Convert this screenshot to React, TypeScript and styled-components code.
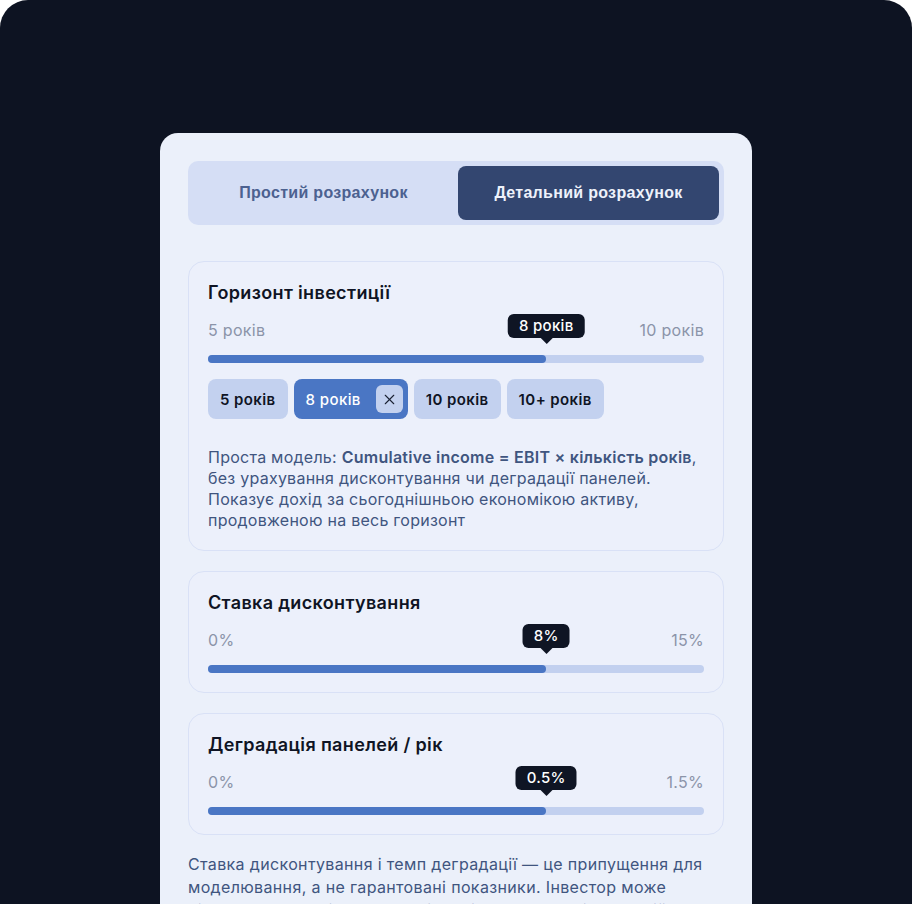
import React, { useState } from 'react';
import styled, { createGlobalStyle } from 'styled-components';
import { X } from 'lucide-react';

const GlobalStyle = createGlobalStyle`
  html, body {
    margin: 0;
    padding: 0;
    background: #ffffff;
    overflow: hidden;
  }
  body {
    font-family: Inter, "Noto Sans", sans-serif;
  }
  * {
    box-sizing: border-box;
  }
`;

interface RangeProps {
  title: string;
  min: string;
  max: string;
  value: string;
  percent: number;
}

const Range: React.FC<RangeProps> = ({ title, min, max, value, percent }) => (
  <>
    <Title>{title}</Title>
    <Limits>
      <span>{min}</span>
      <span>{max}</span>
    </Limits>
    <Track>
      <Fill style={{ width: `${percent}%` }} />
      <Bubble style={{ left: `${percent}%` }}>{value}</Bubble>
    </Track>
  </>
);

const years = ['5 років', '8 років', '10 років', '10+ років'];

const App: React.FC = () => {
  const [mode, setMode] = useState<'simple' | 'detailed'>('detailed');
  const [horizon, setHorizon] = useState('8 років');

  return (
    <>
      <GlobalStyle />
      <Frame>
        <Card>
          <Tabs>
            <Tab $active={mode === 'simple'} onClick={() => setMode('simple')}>
              Простий розрахунок
            </Tab>
            <Tab $active={mode === 'detailed'} onClick={() => setMode('detailed')}>
              Детальний розрахунок
            </Tab>
          </Tabs>

          <Section>
            <Range title="Горизонт інвестиції" min="5 років" max="10 років" value="8 років" percent={68.2} />
            <Chips>
              {years.map((y) => (
                <Chip key={y} $active={horizon === y} onClick={() => setHorizon(y)}>
                  {y}
                  {horizon === y && (
                    <ChipClear>
                      <X size={17} strokeWidth={1.5} />
                    </ChipClear>
                  )}
                </Chip>
              ))}
            </Chips>
            <Note>
              Проста модель: <b>Cumulative income = EBIT × кількість років</b>, без урахування
              дисконтування чи деградації панелей. Показує дохід за сьогоднішньою економікою
              активу, продовженою на весь горизонт
            </Note>
          </Section>

          <Section>
            <Range title="Ставка дисконтування" min="0%" max="15%" value="8%" percent={68.2} />
          </Section>

          <Section>
            <Range title="Деградація панелей / рік" min="0%" max="1.5%" value="0.5%" percent={68.2} />
          </Section>

          <Footer>
            Ставка дисконтування і темп деградації — це припущення для моделювання, а не
            гарантовані показники. Інвестор може підставити власні значення відповідно до своєї
            інвестиційної стратегії.
          </Footer>
        </Card>
      </Frame>
    </>
  );
};

export default App;

const Frame = styled.div`
  height: 100vh;
  overflow: hidden;
  background: #0d1322;
  border-radius: 28px 28px 0 0;
  padding-top: 133px;
`;

const Card = styled.div`
  width: 592px;
  margin: 0 auto;
  min-height: 900px;
  background: #ebf0fa;
  border-radius: 18px 18px 0 0;
  padding: 28px 28px;
  display: flex;
  flex-direction: column;
  gap: 20px;
`;

const Tabs = styled.div`
  display: grid;
  grid-template-columns: 1fr 1fr;
  gap: 4px;
  padding: 5px;
  background: #d5def5;
  border-radius: 10px;
  margin-bottom: 16px;
`;

const Tab = styled.button<{ $active: boolean }>`
  height: 54px;
  border: none;
  border-radius: 8px;
  cursor: pointer;
  font-family: "Liberation Sans", Arial, sans-serif;
  font-size: 16px;
  letter-spacing: 0.3px;
  font-weight: 700;
  background: ${(p) => (p.$active ? '#334670' : 'transparent')};
  color: ${(p) => (p.$active ? '#eef2fb' : '#4c6190')};
`;

const Section = styled.section`
  border: 1px solid #d9e1f6;
  border-radius: 16px;
  padding: 19px;
  background: #ecf0fb;
`;

const Title = styled.h3`
  margin: 0 0 15px;
  font-size: 18px;
  line-height: 24px;
  letter-spacing: 0.35px;
  font-weight: 600;
  color: #0f1424;
`;

const Limits = styled.div`
  display: flex;
  justify-content: space-between;
  font-size: 16px;
  letter-spacing: 0.3px;
  line-height: 20px;
  color: #8b94a9;
  margin-bottom: 15px;
`;

const Track = styled.div`
  position: relative;
  height: 8px;
  border-radius: 4px;
  background: #c2d0ef;
`;

const Fill = styled.div`
  height: 100%;
  border-radius: 4px;
  background: #4a76c4;
`;

const Bubble = styled.div`
  position: absolute;
  bottom: 25px;
  transform: translateX(-50%);
  height: 24px;
  padding: 0 11px;
  border-radius: 6px;
  background: #0f1524;
  color: #ffffff;
  font-size: 15px;
  letter-spacing: 0.3px;
  font-weight: 500;
  line-height: 24px;
  white-space: nowrap;

  &::after {
    content: '';
    position: absolute;
    left: 50%;
    top: 100%;
    margin-left: -6px;
    border-left: 6px solid transparent;
    border-right: 6px solid transparent;
    border-top: 6px solid #0f1524;
  }
`;

const Chips = styled.div`
  display: flex;
  gap: 6px;
  margin-top: 16px;
`;

const Chip = styled.button<{ $active: boolean }>`
  display: flex;
  align-items: center;
  gap: 15px;
  height: 40px;
  padding: ${(p) => (p.$active ? '0 5px 0 12px' : '0 12px')};
  border: none;
  border-radius: 8px;
  cursor: pointer;
  font-family: Inter, sans-serif;
  font-size: 15px;
  letter-spacing: 0.4px;
  font-weight: ${(p) => (p.$active ? 500 : 600)};
  background: ${(p) => (p.$active ? '#4a76c4' : '#c3d1ef')};
  color: ${(p) => (p.$active ? '#ffffff' : '#0f1424')};
`;

const ChipClear = styled.span`
  display: flex;
  align-items: center;
  justify-content: center;
  width: 27px;
  height: 28px;
  border-radius: 6px;
  background: #c3d1ef;
  color: #1a2133;
`;

const Note = styled.p`
  margin: 28px 0 0;
  font-size: 16px;
  letter-spacing: 0.25px;
  line-height: 21px;
  color: #40557f;

  b {
    font-weight: 600;
  }
`;

const Footer = styled.p`
  margin: -2px 0 0;
  font-size: 16px;
  letter-spacing: 0.35px;
  line-height: 23px;
  color: #40557f;
`;
